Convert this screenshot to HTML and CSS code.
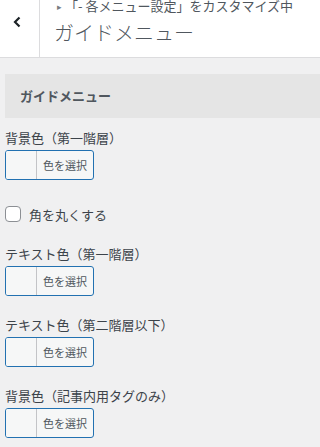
FILE: index.html
```html
<!DOCTYPE html>
<html lang="ja">
<head>
<meta charset="utf-8">
<link rel="stylesheet" href="styles.css">
</head>
<body>
<div class="header">
  <div class="back">
    <svg width="8" height="12" viewBox="0 0 8 12"><path d="M6.5 1.5 L2 6 L6.5 10.5" fill="none" stroke="#1d2327" stroke-width="2.2"/></svg>
  </div>
  <div class="titles">
    <div class="sub"><span class="tri">▸</span>「-&nbsp;各メニュー設定」をカスタマイズ中</div>
    <div class="title">ガイドメニュー</div>
  </div>
</div>
<div class="panel">
  <div class="section-title">ガイドメニュー</div>
  <ul class="controls">
    <li class="control">
      <div class="control-title">背景色（第一階層）</div>
      <button class="color-btn"><span class="swatch"></span><span class="btn-text">色を選択</span></button>
    </li>
    <li class="control check-control">
      <label class="check"><span class="box"></span><span>角を丸くする</span></label>
    </li>
    <li class="control">
      <div class="control-title">テキスト色（第一階層）</div>
      <button class="color-btn"><span class="swatch"></span><span class="btn-text">色を選択</span></button>
    </li>
    <li class="control">
      <div class="control-title">テキスト色（第二階層以下）</div>
      <button class="color-btn"><span class="swatch"></span><span class="btn-text">色を選択</span></button>
    </li>
    <li class="control">
      <div class="control-title">背景色（記事内用タグのみ）</div>
      <button class="color-btn"><span class="swatch"></span><span class="btn-text">色を選択</span></button>
    </li>
  </ul>
</div>
</body>
</html>
```
FILE: styles.css
```css
html, body {
  margin: 0;
  padding: 0;
  background: #f0f0f1;
  font-family: "Noto Sans CJK JP", "Noto Sans", sans-serif;
  color: #3c434a;
  overflow: hidden;
}
.header {
  display: flex;
  height: 57px;
  background: #fff;
  border-bottom: 1px solid #dcdcde;
  overflow: hidden;
}
.back {
  width: 40px;
  border-right: 1px solid #dcdcde;
  display: flex;
  justify-content: center;
  padding-top: 16px;
  box-sizing: border-box;
}
.back svg { display: block; margin-left: -5px; }
.titles {
  padding-left: 14px;
}
.sub {
  font-size: 13px;
  line-height: 16px;
  margin-top: -2px;
  color: #50575e;
  white-space: nowrap;
}
.tri {
  font-size: 9px;
  color: #787c82;
  margin: 0 3px 0 3px;
  vertical-align: 1px;
}
.title {
  font-size: 20px;
  font-weight: 300;
  line-height: 28px;
  margin-top: 4px;
  color: #50575e;
  white-space: nowrap;
}
.panel {
  padding: 16px 0 0 5px;
}
.section-title {
  background: #e5e5e5;
  height: 44px;
  line-height: 44px;
  padding-left: 15px;
  font-size: 13px;
  font-weight: 700;
  color: #50575e;
}
.controls {
  list-style: none;
  margin: 10px 0 0 0;
  padding: 0;
}
.control {
  margin-bottom: 19px;
}
.control-title {
  font-size: 13px;
  line-height: 20px;
  margin-bottom: 2px;
  color: #3c434a;
}
.color-btn {
  display: flex;
  width: 89px;
  height: 30px;
  padding: 0;
  border: 1px solid #2271b1;
  border-radius: 3px;
  background: #f6f7f7;
  box-sizing: border-box;
  font-family: inherit;
  overflow: hidden;
}
.swatch {
  width: 30px;
  height: 100%;
  background: #f6f7f7;
  border-right: 1px solid #c3c4c7;
}
.btn-text {
  flex: 1;
  font-size: 11px;
  line-height: 28px;
  color: #50575e;
  text-align: center;
}
.check-control {
  padding-top: 7px;
  margin-bottom: 22px;
}
.check {
  display: flex;
  align-items: center;
  height: 16px;
  font-size: 13px;
  color: #3c434a;
}
.box {
  width: 16px;
  height: 16px;
  box-sizing: border-box;
  border: 1px solid #8c8f94;
  border-radius: 4px;
  background: #fff;
  margin-right: 8px;
}
```
